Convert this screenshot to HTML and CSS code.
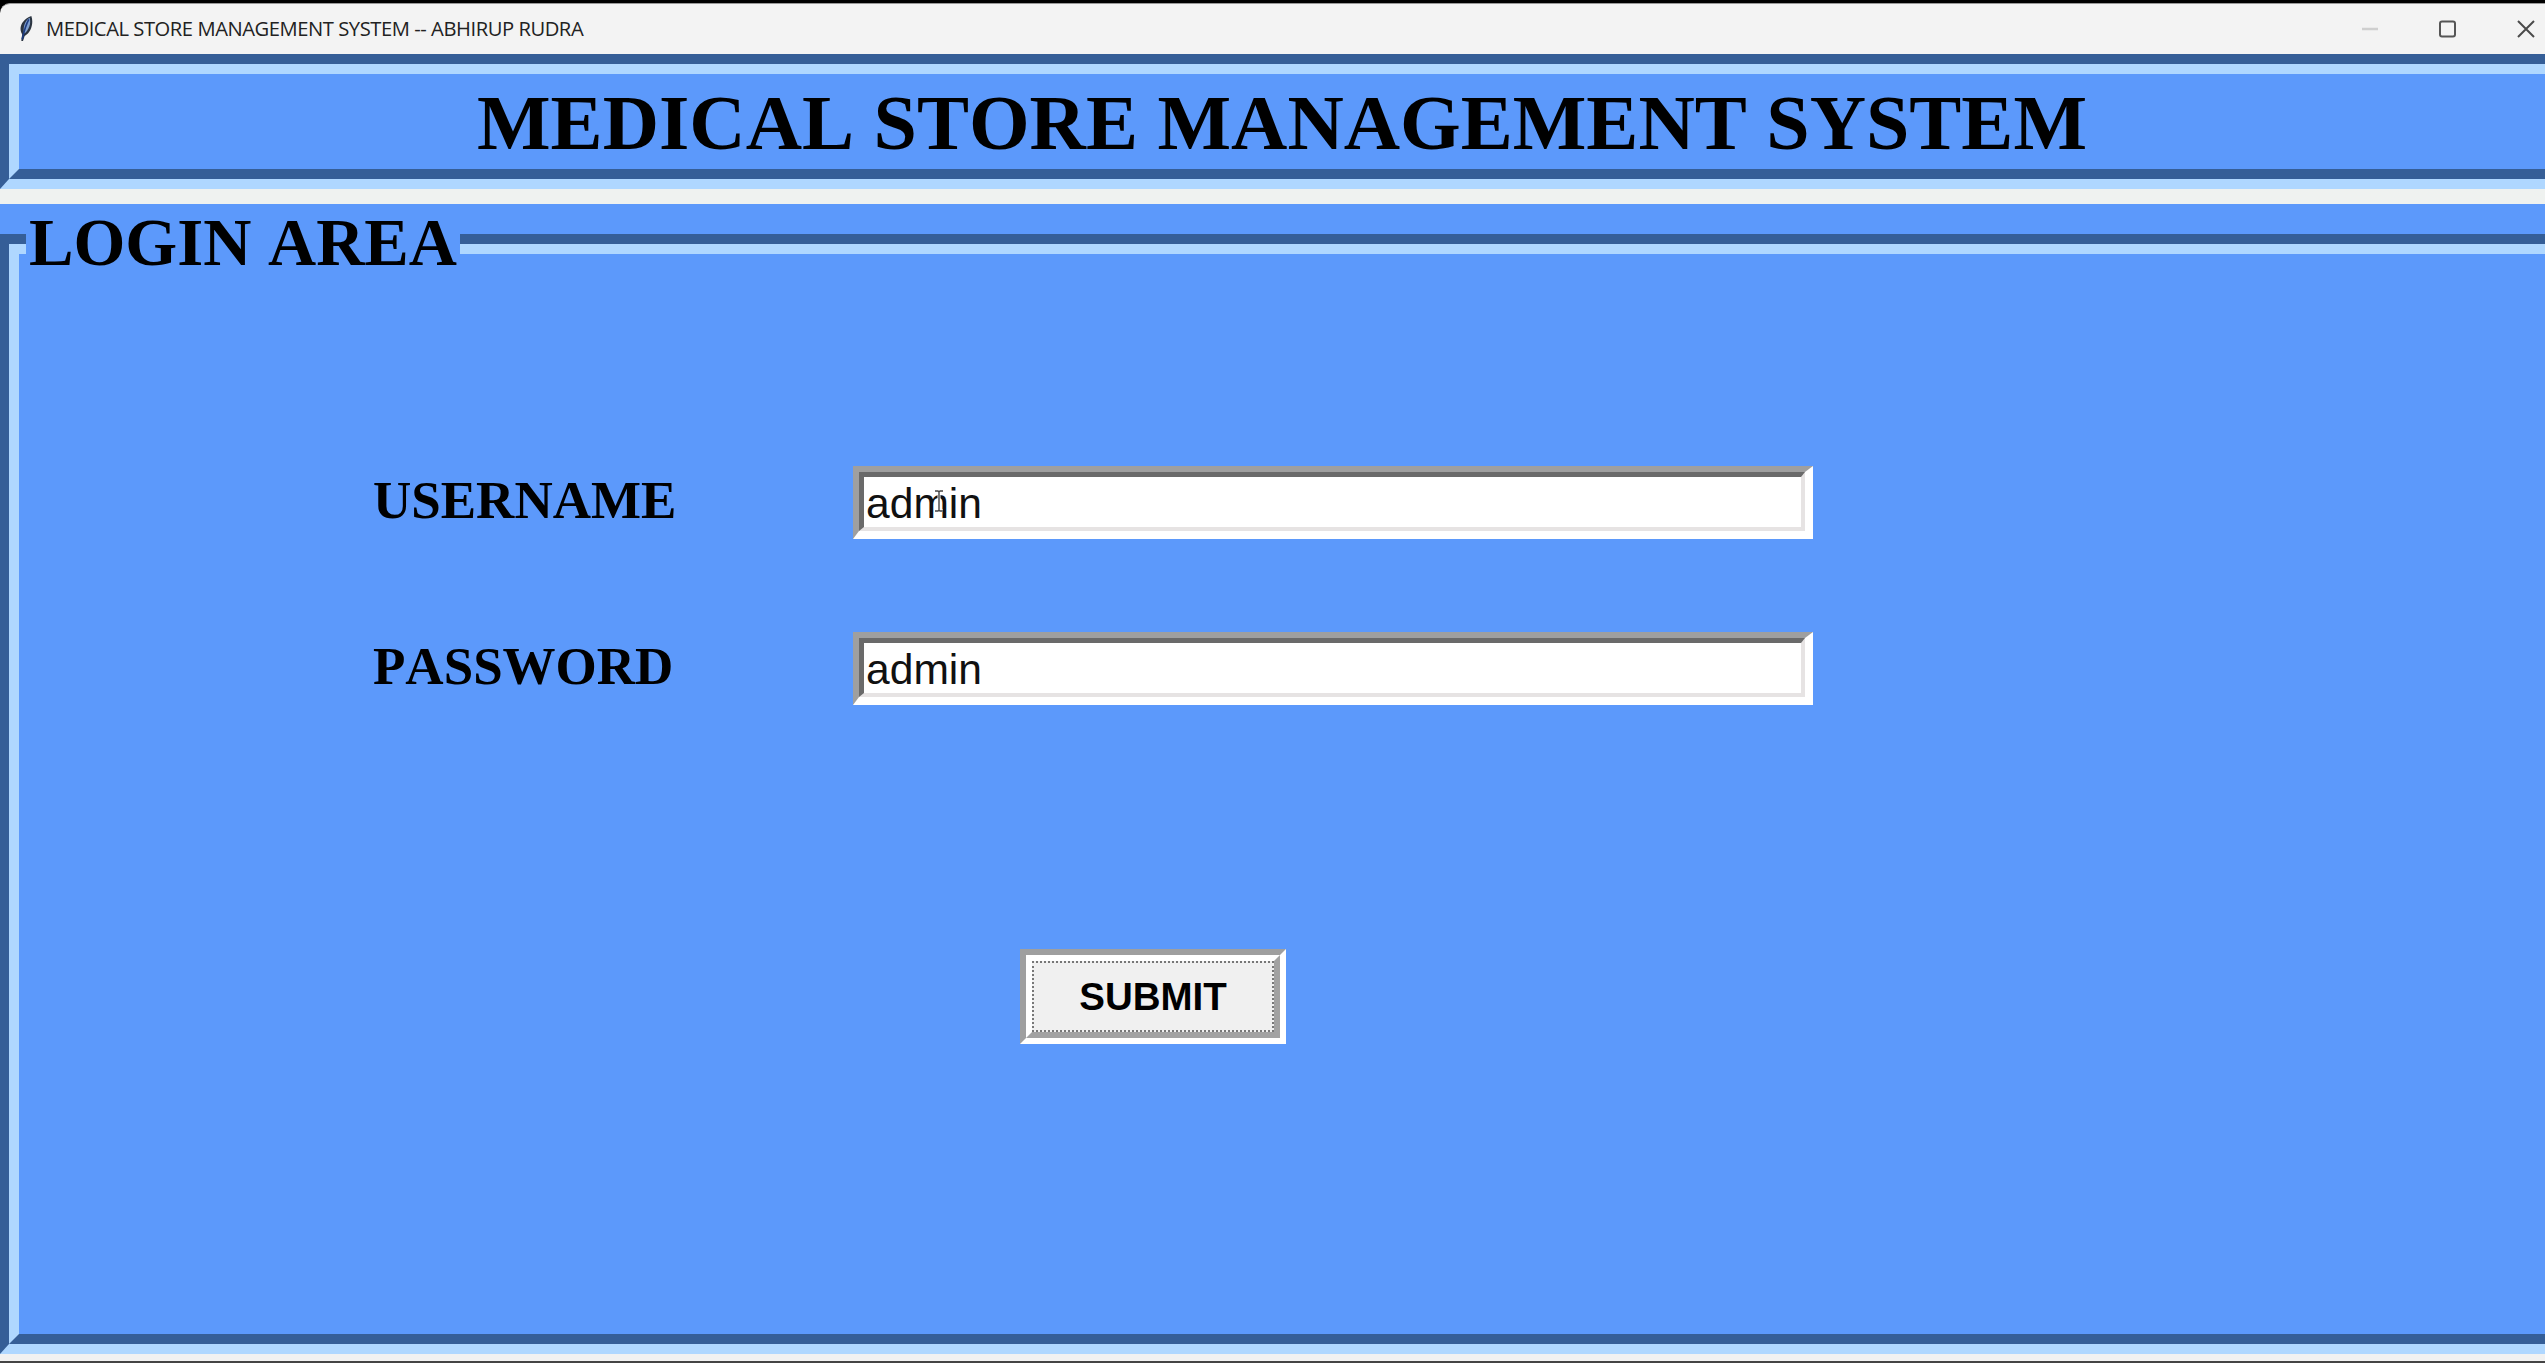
FILE: index.html
```html
<!DOCTYPE html>
<html lang="en">
<head>
<meta charset="utf-8">
<title>MEDICAL STORE MANAGEMENT SYSTEM -- ABHIRUP RUDRA</title>
<link rel="stylesheet" href="styles.css">
</head>
<body>
<div class="window">
  <header class="titlebar">
    <svg class="feather" viewBox="0 0 18 32" width="15" height="27">
      <path d="M4 31 L5 23 C0 15 5 5 16 1 C19 9 16 21 8 25 L6 31Z" fill="#2b3440"/>
      <path d="M7 20 C6 13 9 6 14 3 C16 10 13 17 8 22Z" fill="#7fa0d0"/>
      <path d="M5 29 C7 20 9 12 13 5" fill="none" stroke="#1d3c82" stroke-width="2"/>
    </svg>
    <span class="caption">MEDICAL STORE MANAGEMENT SYSTEM -- ABHIRUP RUDRA</span>
    <svg class="controls" viewBox="0 0 176 20" width="176" height="20" fill="none">
      <path d="M2 10H18" stroke="#cfcfcf" stroke-width="2.5"/>
      <rect x="80" y="2.5" width="15" height="15" rx="2" stroke="#555" stroke-width="2"/>
      <path d="M158 2L174 18M174 2L158 18" stroke="#4a4a4a" stroke-width="2"/>
    </svg>
  </header>
  <div class="groove banner"><div class="groove-inner"><h1>MEDICAL STORE MANAGEMENT SYSTEM</h1></div></div>
  <main class="login">
    <div class="groove frame"><div class="groove-inner">
      <h2 class="legend">LOGIN AREA</h2>
      <form class="form">
        <label class="label" for="user">USERNAME</label>
        <div class="entry"><div class="field" id="user">admin
          <svg class="ibeam" viewBox="0 0 10 22" width="10" height="22" fill="none"><path d="M1 1H4L5 2L6 1H9M5 2V20M1 21H4L5 20L6 21H9" stroke="#fff" stroke-width="3"/><path d="M1 1H4L5 2L6 1H9M5 2V20M1 21H4L5 20L6 21H9" stroke="#444" stroke-width="1.4"/></svg>
        </div></div>
        <label class="label" for="pass">PASSWORD</label>
        <div class="entry"><div class="field" id="pass">admin</div></div>
      </form>
      <div class="submit"><div class="submit-inner"><span class="focus">SUBMIT</span></div></div>
    </div></div>
  </main>
</div>
</body>
</html>
```
FILE: styles.css
```css
* { box-sizing: border-box; }
body { margin: 0; background: #000; overflow: hidden; }
.window { width: 2545px; height: 1363px; display: flex; flex-direction: column; border-top: 3px solid #000; border-bottom: 2px solid #444; overflow: hidden; }
.titlebar { flex: none; height: 51px; display: flex; align-items: center; padding: 0 9px 2px 18px; background: #f3f3f3; border-top: 1px solid #999; border-top-left-radius: 10px; }
.feather { margin-right: 13px; }
.caption { flex: 1; font: 20.2px/26px "Open Sans", sans-serif; letter-spacing: -0.45px; color: #222; white-space: nowrap; }
.controls { margin-top: 2px; }
.groove { width: 2600px; border: 10px solid; border-color: #355e97 #afd7ff #afd7ff #355e97; border-left-width: 9px; }
.groove-inner { height: 100%; border: 10px solid; border-color: #afd7ff #355e97 #355e97 #afd7ff; background: #5c99fb; }
.banner { flex: none; height: 135px; }
h1, h2 { margin: 0; font-family: "Liberation Serif", serif; font-weight: bold; font-kerning: none; color: #000; white-space: nowrap; }
h1 { font-size: 78px; line-height: 97px; padding-left: 458px; }
.login { flex: 1; padding-top: 45px; padding-bottom: 7px; background: linear-gradient(#eff2f0 15px, #5c99fb 15px, #5c99fb 1100px, #f1f1f1 1100px); }
.frame { height: 1120px; }
.legend { position: relative; width: 434px; height: 76px; margin: -49px 0 0 7px; padding-left: 3px; background: #5c99fb; font-size: 66.7px; line-height: 75px; }
.form { display: grid; grid-template-columns: 480px 960px; row-gap: 93px; padding: 185px 0 0 354px; }
.label { font: bold 53px/68px "Liberation Serif", serif; font-kerning: none; }
.entry { height: 73px; border: solid; border-width: 6px 8px 8px 6px; border-color: #9f9f9f #fff #fff #9f9f9f; }
.field { position: relative; height: 100%; border: solid; border-width: 5px 4px 4px 5px; border-color: #6a6a6a #e6e3e3 #e6e3e3 #6a6a6a; background: #fff; font: 42.6px/53px "Liberation Sans", sans-serif; color: #111; padding-left: 2px; }
.ibeam { position: absolute; left: 70px; top: 13px; }
.submit { width: 266px; height: 95px; margin: 244px 0 0 1001px; border: 6px solid; border-color: #9f9f9f #fff #fff #9f9f9f; }
.submit-inner { height: 100%; border: 6px solid; border-color: #fff #a2a2a2 #a2a2a2 #fff; background: #f0f0f0; }
.focus { display: block; height: 100%; border: 2px dotted #777; font: bold 38.5px/67px "Liberation Sans", sans-serif; text-align: center; }
```
